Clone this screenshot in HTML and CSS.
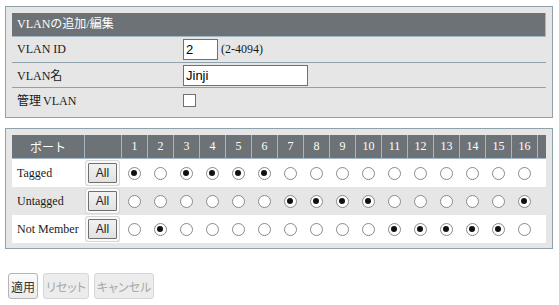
FILE: index.html
```html
<!DOCTYPE html>
<html lang="ja">
<head>
    <meta charset="UTF-8">
    <meta name="viewport" content="width=device-width, initial-scale=1.0">
    <title>VLANの追加/編集</title>
    <link rel="stylesheet" href="styles.css">
</head>
<body>

    <!-- VLAN settings -->
    <div class="panel">
        <div class="panel-title">VLANの追加/編集</div>
        <div class="form-row">
            <div class="form-label">VLAN ID</div>
            <div class="form-field">
                <input class="text-input id-input" type="text" value="2">
                <span class="hint">(2-4094)</span>
            </div>
        </div>
        <div class="form-row">
            <div class="form-label">VLAN名</div>
            <div class="form-field">
                <input class="text-input name-input" type="text" value="Jinji">
            </div>
        </div>
        <div class="form-row">
            <div class="form-label"><span class="jp">管理</span>VLAN</div>
            <div class="form-field">
                <input class="check" type="checkbox">
            </div>
        </div>
    </div>

    <!-- Port membership -->
    <div class="panel port-panel">
        <div class="port-grid" id="port-grid">
            <div class="port-head first">ポート</div>
            <div class="port-head"></div>
        </div>
    </div>

    <div class="actions">
        <button class="btn">適用</button>
        <button class="btn" disabled>リセット</button>
        <button class="btn" disabled>キャンセル</button>
    </div>

    <script>
        // Which ports belong to which mode (1-based)
        const modes = [
            { name: 'Tagged', ports: [1, 3, 4, 5, 6] },
            { name: 'Untagged', ports: [7, 8, 9, 10, 16] },
            { name: 'Not Member', ports: [2, 11, 12, 13, 14, 15] }
        ];
        const grid = document.getElementById('port-grid');

        // Header numbers
        for (let p = 1; p <= 16; p++) {
            const cell = document.createElement('div');
            cell.className = 'port-head';
            cell.textContent = p;
            grid.appendChild(cell);
        }
        const endHead = document.createElement('div');
        endHead.className = 'port-head';
        grid.appendChild(endHead);

        // One row per mode
        modes.forEach((mode, i) => {
            const rowClass = i % 2 === 1 ? 'cell alt' : 'cell';

            const label = document.createElement('div');
            label.className = rowClass + ' row-label';
            label.textContent = mode.name;
            grid.appendChild(label);

            const allCell = document.createElement('div');
            allCell.className = rowClass + ' all-cell';
            allCell.innerHTML = '<button class="all-btn">All</button>';
            grid.appendChild(allCell);

            for (let p = 1; p <= 16; p++) {
                const cell = document.createElement('div');
                cell.className = rowClass;
                const radio = document.createElement('input');
                radio.type = 'radio';
                radio.className = 'radio';
                radio.name = 'port' + p;
                radio.checked = mode.ports.includes(p);
                cell.appendChild(radio);
                grid.appendChild(cell);
            }

            const end = document.createElement('div');
            end.className = rowClass;
            grid.appendChild(end);
        });
    </script>

</body>
</html>
```

FILE: styles.css
```css
body {
    margin: 0;
    padding: 6px 6px 0 5px;
    font-family: "Liberation Serif", "Noto Sans CJK JP", serif;
    font-size: 12px;
    color: #1a1a1a;
    background: #fff;
}

.panel {
    border: 1px solid #8fa2ac;
    background: #e6e6e6;
    padding: 6px 6px 5px 6px;
}

.panel-title {
    height: 23px;
    line-height: 23px;
    padding-left: 5px;
    background: #6c7276;
    color: #fff;
    border-bottom: 1px solid #a4b7c5;
    border-right: 1px solid #a4b7c5;
}

.form-row {
    display: flex;
    align-items: center;
    height: 25px;
    box-sizing: border-box;
}

.form-row + .form-row {
    border-top: 1px solid #8fa2ac;
}

.form-label {
    width: 166px;
    padding-left: 5px;
}

/* the gothic kanji sit a little apart from the latin text */
.jp {
    margin-right: 2px;
}

.form-field {
    display: flex;
    align-items: center;
    gap: 3px;
}

.text-input {
    box-sizing: border-box;
    height: 21px;
    margin: 0;
    padding: 0 2px;
    border: 1px solid #707070;
    background: #fff;
    font-family: "Liberation Sans", Arial, sans-serif;
    font-size: 13px;
    color: #000;
    outline: none;
}

.id-input {
    width: 35px;
}

.name-input {
    width: 125px;
}

.check {
    appearance: none;
    width: 13px;
    height: 13px;
    margin: 1px 0 0 0;
    border: 1px solid #707070;
    background: #fff;
}

/* Port table */
.port-panel {
    margin-top: 10px;
}

.port-grid {
    display: grid;
    grid-template-columns: 72px 37px repeat(16, 26px) 1fr;
    grid-auto-rows: 28px;
    grid-template-rows: 24px;
}

.port-head {
    background: #6c7276;
    color: #fff;
    display: flex;
    align-items: center;
    justify-content: center;
    border-left: 1px solid #a4b7c5;
    border-bottom: 1px solid #a4b7c5;
}

.port-head.first {
    border-left: none;
}

.cell {
    background: #fff;
    display: flex;
    align-items: center;
    justify-content: center;
}

.cell.alt {
    background: #e6e6e6;
}

.row-label {
    justify-content: flex-start;
    padding-left: 5px;
    white-space: nowrap;
}

.all-btn {
    width: 29px;
    height: 20px;
    margin: 0;
    padding: 0;
    border: 1px solid #6f6f6f;
    background: linear-gradient(#f2f2f2, #e2e2e2);
    font-family: "Liberation Sans", Arial, sans-serif;
    font-size: 12px;
    color: #222;
    box-shadow: 0 0 0 2px #fafafa, 0 0 0 3px #d6d6d6;
    border-radius: 1px;
}

.radio {
    appearance: none;
    width: 13px;
    height: 13px;
    margin: 0;
    border: 1px solid #8a8a8a;
    border-radius: 50%;
    background: #fff;
    position: relative;
}

.radio:checked::after {
    content: '';
    position: absolute;
    top: 2.5px;
    left: 2.5px;
    width: 6px;
    height: 6px;
    border-radius: 50%;
    background: #111;
}

/* Bottom buttons */
.actions {
    display: flex;
    gap: 5px;
    margin: 24px 0 0 3px;
}

.btn {
    height: 26px;
    margin: 0;
    padding: 0 2px;
    border: 1px solid #b5b5b5;
    border-radius: 3px;
    background: linear-gradient(#fbfbfb, #ebebeb);
    font-family: "Noto Sans CJK JP", sans-serif;
    font-size: 12px;
    font-feature-settings: "palt";
    color: #333;
}

.btn:disabled {
    border-color: #d6d6d6;
    background: #ececec;
    color: #a8a8a8;
}
```
